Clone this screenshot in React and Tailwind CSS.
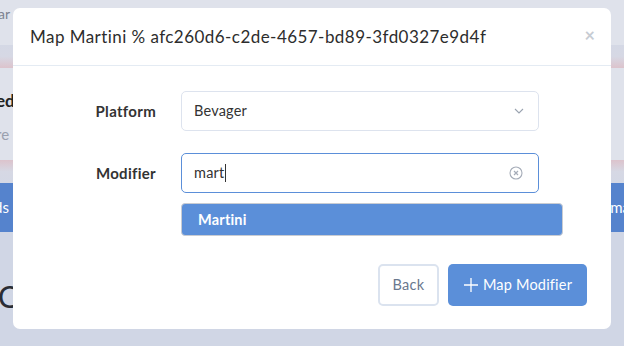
import React from "react";

export default function App() {
  return (
    <div className="relative w-[624px] h-[346px] overflow-hidden bg-[#d0d6e5]" style={{ fontFamily: "Lato, 'Open Sans', sans-serif" }}>
      {/* dimmed background page */}
      <div className="flex flex-col w-full">
        <div className="h-[45px] bg-[#dfe2eb] flex items-start pt-[5px] text-[14px] text-[#7d8391] leading-[18px]">
          <span className="ml-[-2px]">ar</span>
        </div>
        <div className="h-[23px] bg-gradient-to-b from-[#d4d8e5] via-[#d6d8e4] to-[#dcc3cc]" />
        <div className="h-[92px] bg-[#dfe2eb] flex flex-col pt-[22px]">
          <div className="text-[17px] font-bold text-[#222] leading-[22px] ml-[-4px]">ed</div>
          <div className="text-[15px] text-[#9aa0ae] mt-[13px] leading-[18px] ml-[-4px]">re</div>
        </div>
        <div className="h-[23px] bg-gradient-to-b from-[#dcc3cc] via-[#d6d8e4] to-[#d4d8e5]" />
        <div className="h-[49px] bg-[#5583cd] flex items-center justify-between text-white text-[15px]">
          <span className="ml-[-6px]">ds</span>
          <span className="mr-[-6px]">ma</span>
        </div>
        <div className="h-[114px] bg-[#d0d6e5] pt-[49px]">
          <div className="text-[30px] text-[#2a2d35] leading-[30px] ml-[-2px]">C</div>
        </div>
      </div>

      {/* modal */}
      <div className="absolute left-[13px] top-[8px] w-[598px] h-[321px] bg-white rounded-[7px] flex flex-col">
        <div className="h-[58px] border-b border-[#e4ebf3] flex items-center justify-between pl-[17px] pr-[16px]">
          <span className="text-[17px] text-[#2d2d2d] tracking-[0.45px]">Map Martini % afc260d6-c2de-4657-bd89-3fd0327e9d4f</span>
          <span className="text-[#c7ccd3] text-[18px] font-bold leading-none mt-[-4px]">×</span>
        </div>
        <div className="flex flex-col pt-[25px]">
          <div className="flex items-center h-[40px]">
            <div className="w-[143px] text-right text-[15px] tracking-[0.3px] font-bold text-[#333]">Platform</div>
            <div className="ml-[25px] w-[358px] h-[40px] border border-[#dde3ee] rounded-[5px] flex items-center justify-between pl-[12px] pr-[12px]">
              <span className="text-[14.5px] tracking-[0.2px] text-[#333]">Bevager</span>
              <svg width="12" height="8" viewBox="0 0 12 8" className="mr-[1px]">
                <path d="M2 2l4 4 4-4" fill="none" stroke="#9aa3b0" strokeWidth="1.1" />
              </svg>
            </div>
          </div>
          <div className="flex items-center h-[40px] mt-[22px]">
            <div className="w-[143px] text-right text-[15px] tracking-[0.3px] font-bold text-[#333]">Modifier</div>
            <div className="ml-[25px] w-[358px] h-[40px] border border-[#5b8fd9] rounded-[5px] flex items-center justify-between pl-[12px] pr-[15px]">
              <span className="text-[14.5px] tracking-[0.2px] text-[#333] flex items-center">mart<span className="inline-block w-px h-[18px] bg-[#333] ml-[0.5px]" /></span>
              <svg width="14" height="14" viewBox="0 0 14 14">
                <circle cx="7" cy="7" r="6" fill="none" stroke="#a5acb8" strokeWidth="1.1" />
                <path d="M5 5l4 4M9 5l-4 4" stroke="#a5acb8" strokeWidth="1.2" />
              </svg>
            </div>
          </div>
          <div className="ml-[168px] mt-[10px] w-[382px] h-[33px] bg-[#5b8fd9] border border-[#c9ccd2] rounded-[4px] flex items-center pl-[16px]">
            <span className="text-[14.5px] tracking-[0.2px] font-bold text-white">Martini</span>
          </div>
        </div>
        <div className="flex justify-end gap-[9px] mt-[28px] pr-[24px]">
          <div className="w-[61px] h-[42px] border-2 border-[#dbe3ef] rounded-[5px] flex items-center justify-center text-[14.5px] tracking-[0.3px] text-[#6a788e]">Back</div>
          <div className="w-[139px] h-[42px] bg-[#5b8fd9] rounded-[5px] flex items-center justify-center gap-[4px] text-[14.5px] tracking-[0.2px] text-white">
            <svg width="16" height="16" viewBox="0 0 16 16">
              <path d="M8 1v14M1 8h14" stroke="white" strokeWidth="1.3" />
            </svg>
            <span>Map Modifier</span>
          </div>
        </div>
      </div>
    </div>
  );
}
